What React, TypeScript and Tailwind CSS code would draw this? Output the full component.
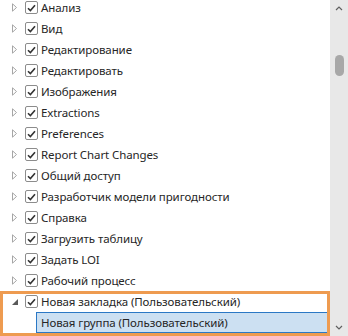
import { useState } from 'react'

const items = [
  'Анализ',
  'Вид',
  'Редактирование',
  'Редактировать',
  'Изображения',
  'Extractions',
  'Preferences',
  'Report Chart Changes',
  'Общий доступ',
  'Разработчик модели пригодности',
  'Справка',
  'Загрузить таблицу',
  'Задать LOI',
  'Рабочий процесс',
]

const Check = () => (
  <span className="flex h-[13px] w-[13px] shrink-0 items-center justify-center rounded-[2px] border border-[#8c8c8c] bg-white">
    <svg width="9" height="8" viewBox="0 0 9 8">
      <path d="M1 4.2 L3.4 6.6 L8 1.2" fill="none" stroke="#333" strokeWidth="1.6" />
    </svg>
  </span>
)

const Collapsed = () => (
  <svg width="5" height="9" viewBox="0 0 5 9">
    <path d="M0.5 0.8 L4.5 4.5 L0.5 8.2 Z" fill="none" stroke="#a6a6a6" strokeWidth="1" />
  </svg>
)

const Expanded = () => (
  <svg width="6" height="6" viewBox="0 0 6 6">
    <path d="M6 0 L6 6 L0 6 Z" fill="#595959" />
  </svg>
)

const Row = ({ label, open }: { label: string; open?: boolean }) => (
  <div className="flex h-[21px] items-center">
    <span className="flex w-[25px] shrink-0 items-center pl-[12px]">{open ? <Expanded /> : <Collapsed />}</span>
    <Check />
    <span className="ml-[3px] whitespace-nowrap">{label}</span>
  </div>
)

export default function App() {
  const [sel] = useState('Новая группа (Пользовательский)')
  return (
    <div
      className="flex h-[336px] w-[348px] overflow-hidden bg-white text-[11.5px] tracking-[-0.1px] text-[#262626]"
      style={{ fontFamily: '"Noto Sans", "Open Sans", sans-serif' }}
    >
      <div className="relative w-[330px] shrink-0 overflow-hidden">
        <div className="-mt-[3px]">
          {items.map((it) => (
            <Row key={it} label={it} />
          ))}
          <Row label="Новая закладка (Пользовательский)" open />
          <div className="flex h-[21px] pl-[36px]">
            <div className="flex flex-1 items-center border border-[#2b78c5] bg-[#cce0f2] pl-[4px] whitespace-nowrap">
              {sel}
            </div>
          </div>
        </div>
        <div className="pointer-events-none absolute left-0 top-[291px] h-[45px] w-[330px] border-[3px] border-[#ee9b50]" />
      </div>
      <div className="flex w-[18px] flex-col items-center bg-[#e8e8e8]">
        <svg className="mt-[6px]" width="8" height="5" viewBox="0 0 8 5">
          <path d="M1 4 L4 1 L7 4" fill="none" stroke="#606060" strokeWidth="1.2" />
        </svg>
        <div className="mt-[44px] h-[21px] w-[9px] rounded-full bg-[#a8a8a8]" />
        <div className="flex-1" />
        <svg className="mb-[6px]" width="8" height="5" viewBox="0 0 8 5">
          <path d="M1 1 L4 4 L7 1" fill="none" stroke="#606060" strokeWidth="1.2" />
        </svg>
      </div>
    </div>
  )
}
